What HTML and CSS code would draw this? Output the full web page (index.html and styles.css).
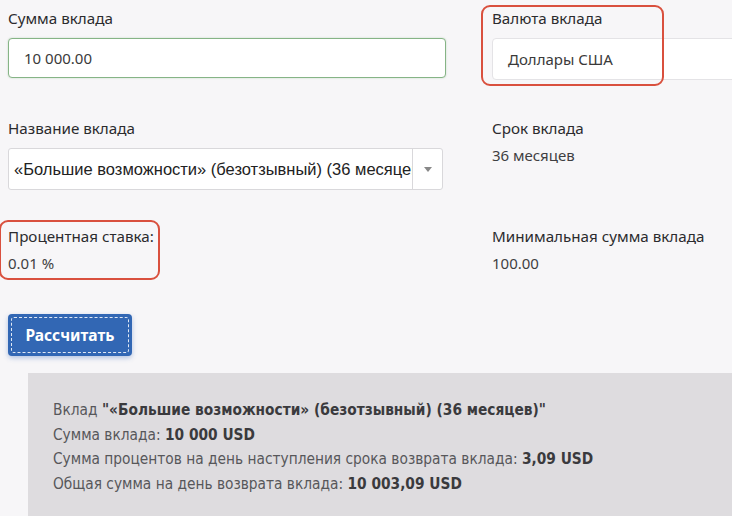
FILE: index.html
```html
<!DOCTYPE html>
<html lang="ru">
<head>
<meta charset="utf-8">
<link rel="stylesheet" href="styles.css">
</head>
<body>
<div class="page">
  <div class="grid">
    <div class="field row1">
      <div class="label">Сумма вклада</div>
      <div class="input">10 000.00</div>
    </div>
    <div class="field row1">
      <div class="label">Валюта вклада</div>
      <div class="input plain">Доллары США</div>
      <div class="hl hl-currency"></div>
    </div>

    <div class="field row2">
      <div class="label">Название вклада</div>
      <div class="select">
        <span class="select-text">«Большие возможности» (безотзывный) (36 месяцев)</span>
        <span class="select-arrow"><svg width="8" height="5" viewBox="0 0 8 5"><path d="M0 0h8L4 5z" fill="#888"/></svg></span>
      </div>
    </div>
    <div class="field row2">
      <div class="label">Срок вклада</div>
      <div class="value">36 месяцев</div>
    </div>

    <div class="field row3">
      <div class="label">Процентная ставка:</div>
      <div class="value">0.01 %</div>
      <div class="hl hl-rate"></div>
    </div>
    <div class="field row3">
      <div class="label">Минимальная сумма вклада</div>
      <div class="value">100.00</div>
    </div>
  </div>

  <button class="btn"><span class="btn-inner">Рассчитать</span></button>

  <div class="result">
    <p>Вклад <b>"«Большие возможности» (безотзывный) (36 месяцев)"</b></p>
    <p>Сумма вклада: <b>10 000 USD</b></p>
    <p>Сумма процентов на день наступления срока возврата вклада: <b>3,09 USD</b></p>
    <p>Общая сумма на день возврата вклада: <b>10 003,09 USD</b></p>
  </div>
</div>
</body>
</html>
```
FILE: styles.css
```css
html, body {
  margin: 0;
  padding: 0;
  background: #f7f6f8;
  overflow: hidden;
}
body {
  font-family: "Noto Sans", "Open Sans", sans-serif;
  color: #2b2b2e;
  width: 732px;
  height: 516px;
}
.page {
  padding: 7px 0 0 8px;
}
.grid {
  display: grid;
  grid-template-columns: 438px 1fr;
  column-gap: 46px;
  row-gap: 0;
}
.field {
  position: relative;
}
.row1 { height: 110px; }
.row2 { height: 108px; }
.row3 { height: 84px; }
.label {
  font-size: 15.2px;
  line-height: 22px;
  color: #2b2b2e;
  margin-bottom: 9px;
}
.input {
  box-sizing: border-box;
  height: 40px;
  border: 1px solid #86b486;
  border-radius: 4px;
  background: #fff;
  font-size: 15px;
  color: #3a3a3a;
  padding: 0 15px;
  display: flex;
  align-items: center;
  box-shadow: 0 0 2px rgba(120, 170, 120, 0.4);
}
.input.plain {
  border-color: #e4e3e6;
  box-shadow: none;
  height: 42px;
  margin-right: -20px;
}
.select {
  box-sizing: border-box;
  width: 435px;
  height: 42px;
  border: 1px solid #d9d8db;
  border-radius: 3px;
  background: #fff;
  display: flex;
  align-items: center;
}
.select-text {
  flex: 1;
  overflow: hidden;
  white-space: nowrap;
  font-family: "Liberation Sans", Arial, sans-serif;
  font-size: 16.5px;
  color: #222;
  padding-left: 5px;
}
.select-arrow {
  width: 29px;
  height: 100%;
  border-left: 1px solid #d9d8db;
  display: flex;
  align-items: center;
  justify-content: center;
}
.value {
  font-size: 15px;
  line-height: 20px;
  color: #3f3f42;
  margin-top: -3px;
}
.hl {
  position: absolute;
  border: 2.5px solid #d9503e;
  border-radius: 9px;
  box-sizing: border-box;
  pointer-events: none;
}
.hl-currency {
  left: -11px;
  top: -2px;
  width: 183px;
  height: 81px;
}
.hl-rate {
  left: -9px;
  top: -5px;
  width: 161px;
  height: 60px;
}
.btn {
  display: block;
  margin-top: 5px;
  width: 124px;
  height: 42px;
  padding: 3px;
  border: 0;
  border-radius: 4px;
  background: #3267b4;
  box-shadow: 0 2px 5px rgba(50, 100, 180, 0.35);
  font-family: "Noto Sans", sans-serif;
  cursor: pointer;
}
.btn-inner {
  display: flex;
  align-items: center;
  justify-content: center;
  height: 100%;
  border: 1px dashed rgba(255, 255, 255, 0.85);
  border-radius: 3px;
  box-sizing: border-box;
  color: #fff;
  font-size: 15.5px;
  font-weight: 700;
}
.result {
  margin: 17px 0 0 20px;
  background: #dedcdf;
  padding: 25px 0 20px 25px;
  height: 160px;
  box-sizing: border-box;
  font-family: "DejaVu Sans Condensed", "DejaVu Sans", sans-serif;
  font-stretch: condensed;
  font-size: 15.3px;
  color: #57575a;
}
.result p {
  margin: 0;
  line-height: 24.5px;
}
.result b {
  color: #3a3a3d;
}
```
